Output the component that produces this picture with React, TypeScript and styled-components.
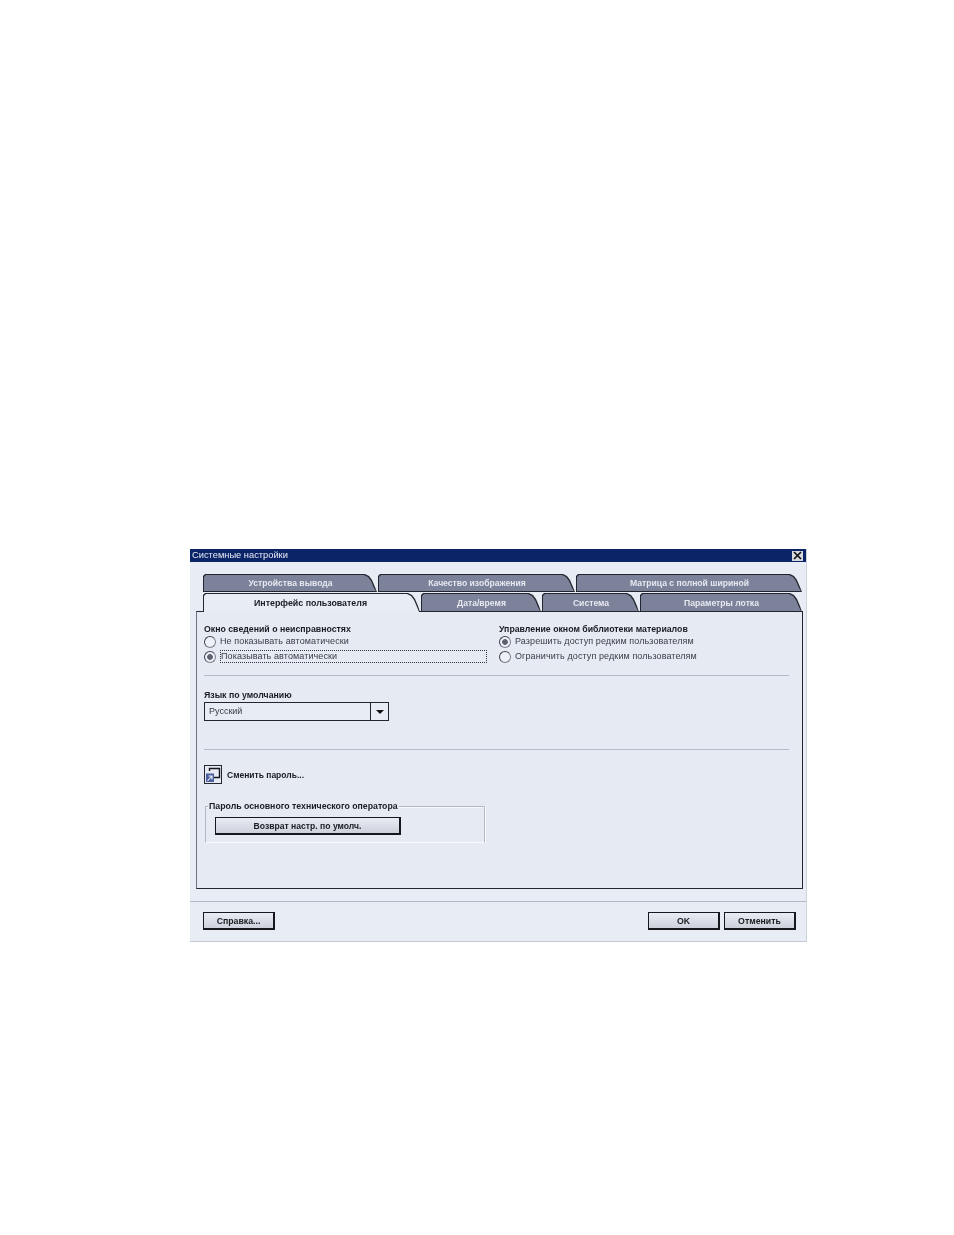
import React from "react";
import styled, { createGlobalStyle } from "styled-components";

const GlobalStyle = createGlobalStyle`
  body {
    margin: 0;
    background: #fff;
    font-family: "Liberation Sans", Arial, sans-serif;
    color: #1a1c22;
  }
`;

const topTabs = [
  { label: "Устройства вывода", width: 175 },
  { label: "Качество изображения", width: 198 },
  { label: "Матрица с полной шириной", width: 227 },
];

const bottomTabs = [
  { label: "Интерфейс пользователя", width: 218, active: true },
  { label: "Дата/время", width: 121 },
  { label: "Система", width: 98 },
  { label: "Параметры лотка", width: 163 },
];

const App: React.FC = () => {
  return (
    <Page>
      <GlobalStyle />
      <Dialog>
        <TitleBar>
          <span>Системные настройки</span>
          <CloseBox>
            <svg width="9" height="9" viewBox="0 0 9 9">
              <path d="M1 1l7 7M8 1l-7 7" stroke="#111" strokeWidth="1.7" />
            </svg>
          </CloseBox>
        </TitleBar>
        <Body>
          <TabRow>
            {topTabs.map((t) => (
              <Tab key={t.label} $width={t.width}>
                <span>{t.label}</span>
              </Tab>
            ))}
          </TabRow>
          <TabRow>
            {bottomTabs.map((t) => (
              <Tab key={t.label} $width={t.width} $active={t.active}>
                <span>{t.label}</span>
              </Tab>
            ))}
          </TabRow>
          <Panel>
            <TwoColumns>
              <div>
                <GroupTitle>Окно сведений о неисправностях</GroupTitle>
                <RadioRow>
                  <Radio />
                  <RadioLabel>Не показывать автоматически</RadioLabel>
                </RadioRow>
                <RadioRow>
                  <Radio $checked />
                  <RadioLabel $focused>Показывать автоматически</RadioLabel>
                </RadioRow>
              </div>
              <div>
                <GroupTitle>Управление окном библиотеки материалов</GroupTitle>
                <RadioRow>
                  <Radio $checked />
                  <RadioLabel>Разрешить доступ редким пользователям</RadioLabel>
                </RadioRow>
                <RadioRow>
                  <Radio />
                  <RadioLabel>Ограничить доступ редким пользователям</RadioLabel>
                </RadioRow>
              </div>
            </TwoColumns>
            <Separator />
            <LanguageBlock>
              <GroupTitle>Язык по умолчанию</GroupTitle>
              <Select>
                <SelectValue>Русский</SelectValue>
                <SelectArrow />
              </Select>
            </LanguageBlock>
            <Separator />
            <PasswordRow>
              <IconButton>
                <svg width="16" height="17" viewBox="0 0 16 17">
                  <path d="M4.5 5V2.5h10v9H9" fill="none" stroke="#15171c" strokeWidth="1.4" />
                  <rect x="1" y="7.5" width="8" height="8.5" fill="#4a5d9e" />
                  <path d="M2.5 15l4-4.5M3.5 10h3.5v3.5" fill="none" stroke="#f2f4fa" strokeWidth="1.1" />
                </svg>
              </IconButton>
              <PasswordLabel>Сменить пароль...</PasswordLabel>
            </PasswordRow>
            <Fieldset>
              <Legend>Пароль основного технического оператора</Legend>
              <ResetButton>Возврат настр. по умолч.</ResetButton>
            </Fieldset>
          </Panel>
        </Body>
        <Footer>
          <PushButton>Справка...</PushButton>
          <FooterRight>
            <PushButton>OK</PushButton>
            <PushButton>Отменить</PushButton>
          </FooterRight>
        </Footer>
      </Dialog>
    </Page>
  );
};

const Page = styled.div`
  width: 954px;
  height: 1235px;
  padding: 549px 0 0 190px;
  box-sizing: border-box;
  overflow: hidden;
`;

const Dialog = styled.div`
  width: 617px;
  height: 393px;
  background: #e8ecf4;
  border-right: 1px solid #cfd3dc;
  border-bottom: 1px solid #c3c8d2;
  box-sizing: border-box;
  display: flex;
  flex-direction: column;
  filter: blur(0.3px);
`;

const TitleBar = styled.div`
  height: 13px;
  flex: none;
  background: #0b2468;
  color: #e8ecf6;
  font-size: 9.3px;
  line-height: 13px;
  padding: 0 3px 0 2px;
  display: flex;
  align-items: center;
  justify-content: space-between;
`;

const CloseBox = styled.div`
  width: 11px;
  height: 10px;
  background: #d6d9e0;
  display: flex;
  align-items: center;
  justify-content: center;
`;

const Body = styled.div`
  padding: 12px 3px 0 6px;
  height: 327px;
  box-sizing: border-box;
  flex: none;
`;

const TabRow = styled.div`
  display: flex;
  margin-left: 7px;
  height: 18px;
  margin-bottom: 1px;
  position: relative;
  z-index: 1;

  &:nth-child(2) {
    margin-bottom: -1px;
    height: 19px;
  }
`;

const tabShape = `polygon(0 2px, 2px 0, calc(100% - 13px) 0, calc(100% - 9px) 2px, calc(100% - 6px) 6px, calc(100% - 3px) 13px, calc(100% - 1px) 100%, 0 100%)`;

const Tab = styled.div<{ $width: number; $active?: boolean }>`
  position: relative;
  width: ${(p) => p.$width}px;
  flex: none;
  background: #23262e;
  clip-path: ${tabShape};
  display: flex;
  align-items: center;
  justify-content: center;
  padding-right: ${(p) => (p.$active ? 3 : 0)}px;
  box-sizing: border-box;
  font-size: ${(p) => (p.$active ? 8.85 : 8.6)}px;
  font-weight: bold;
  color: ${(p) => (p.$active ? "#1a1c22" : "#e6e9f0")};

  &::before {
    content: "";
    position: absolute;
    inset: 1px 1px ${(p) => (p.$active ? 0 : "1px")} 1px;
    background: ${(p) => (p.$active ? "#e8ecf4" : "#7c829a")};
    clip-path: ${tabShape};
  }

  span {
    position: relative;
  }
`;

const Panel = styled.div`
  height: 278px;
  box-sizing: border-box;
  background: #e6eaf3;
  border-top: 1px solid #23262e;
  border-left: 1px solid #6e7280;
  border-right: 1px solid #23262e;
  border-bottom: 1px solid #23262e;
  padding: 11px 13px 0 7px;
`;

const TwoColumns = styled.div`
  display: grid;
  grid-template-columns: 295px 1fr;
  height: 52px;
`;

const GroupTitle = styled.div`
  font-size: 8.75px;
  font-weight: bold;
  line-height: 13px;
  height: 11px;
`;

const RadioRow = styled.div`
  display: flex;
  align-items: center;
  height: 15px;
  gap: 4px;
`;

const Radio = styled.div<{ $checked?: boolean }>`
  width: 12px;
  height: 12px;
  box-sizing: border-box;
  flex: none;
  border-radius: 50%;
  border: 1px solid #3f434e;
  border-right-color: #7c808c;
  border-bottom-color: #7c808c;
  background: ${(p) =>
    p.$checked
      ? "radial-gradient(circle, #5e6270 0 2.5px, #eef1f7 3.2px)"
      : "#eef1f7"};
`;

const RadioLabel = styled.div<{ $focused?: boolean }>`
  font-size: 9px;
  line-height: 11px;
  letter-spacing: 0.1px;
  color: #3a3d46;
  ${(p) =>
    p.$focused &&
    `
    width: 267px;
    box-sizing: border-box;
    border: 1px dotted #33363f;
  `}
`;

const Separator = styled.div`
  height: 1px;
  background: #b6bac6;
`;

const LanguageBlock = styled.div`
  height: 73px;
  box-sizing: border-box;
  padding-top: 13px;
`;

const Select = styled.div`
  width: 185px;
  height: 19px;
  margin-top: 2px;
  box-sizing: border-box;
  border: 1px solid #23262e;
  display: flex;
  background: #e8ecf4;
`;

const SelectValue = styled.div`
  flex: 1;
  font-size: 9px;
  line-height: 17px;
  padding-left: 4px;
  color: #3a3d46;
`;

const SelectArrow = styled.div`
  width: 17px;
  border-left: 1px solid #23262e;
  display: flex;
  align-items: center;
  justify-content: center;

  &::after {
    content: "";
    border-top: 4px solid #111;
    border-left: 4px solid transparent;
    border-right: 4px solid transparent;
  }
`;

const PasswordRow = styled.div`
  display: flex;
  align-items: center;
  gap: 5px;
  margin-top: 15px;
`;

const IconButton = styled.div`
  width: 18px;
  height: 19px;
  box-sizing: border-box;
  border: 1px solid #23262e;
  display: flex;
  align-items: center;
  justify-content: center;
  svg {
    flex: none;
  }
`;

const PasswordLabel = styled.div`
  font-size: 8.5px;
  font-weight: bold;
`;

const Fieldset = styled.div`
  position: relative;
  margin: 22px 0 0 1px;
  width: 280px;
  height: 37px;
  box-sizing: border-box;
  border: 1px solid #b4b8c4;
  border-bottom-color: #f8f9fc;
  box-shadow: inset 0 1px 0 #f8f9fc, 1px 0 0 #f8f9fc;
  padding: 10px 0 0 9px;
`;

const Legend = styled.div`
  position: absolute;
  top: -6px;
  left: 2px;
  background: #e6eaf3;
  font-size: 8.75px;
  font-weight: bold;
  line-height: 11px;
  white-space: nowrap;
  padding: 0 1px;
`;

const PushButton = styled.div`
  width: 72px;
  height: 18px;
  box-sizing: border-box;
  border: 1px solid #16181e;
  border-bottom-width: 2px;
  border-right-width: 2px;
  background: linear-gradient(#e9ecf3, #cdd1db);
  font-size: 8.75px;
  font-weight: bold;
  line-height: 17px;
  text-align: center;
`;

const ResetButton = styled(PushButton)`
  width: 186px;
  height: 18px;
  font-size: 8.6px;
`;

const Footer = styled.div`
  flex: 1;
  border-top: 1px solid #b6bac6;
  margin-top: 12px;
  padding: 10px 10px 0 13px;
  display: flex;
  justify-content: space-between;
  align-items: flex-start;
`;

const FooterRight = styled.div`
  display: flex;
  gap: 4px;
`;

export default App;
